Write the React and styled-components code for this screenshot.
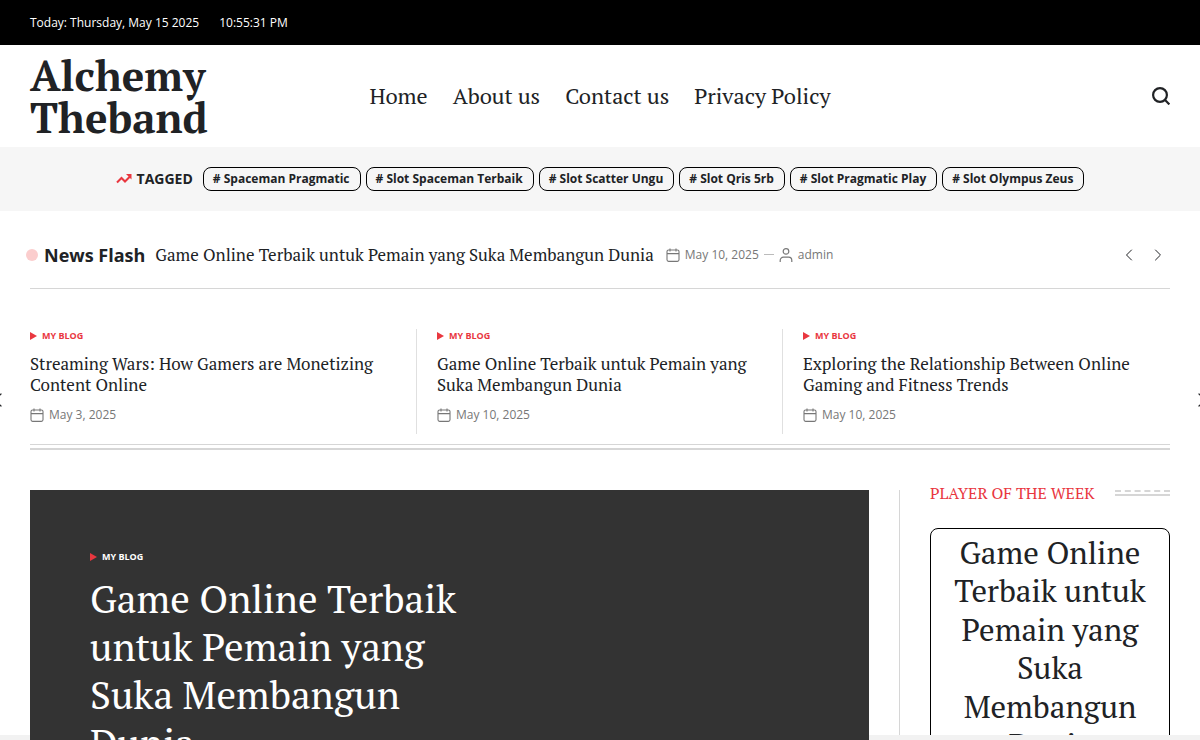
import React from 'react';
import styled, {createGlobalStyle, css} from 'styled-components';
import {ChevronLeft, ChevronRight} from 'lucide-react';

const colors = {
    text: '#202225',
    accent: '#e9373f',
    muted: '#777',
    line: '#d6d6d6',
    soft: '#f6f6f6',
};

const sans = '"Open Sans", "Noto Sans", sans-serif';
const serif = '"PT Serif", "Liberation Serif", serif';

const GlobalStyle = createGlobalStyle`
    *, *::before, *::after {
        box-sizing: border-box;
    }
    html {
        scrollbar-width: none;
    }
    body {
        margin: 0;
        background: #fff;
        color: ${colors.text};
        font-family: ${sans};
        font-size: 12px;
    }
    h1, h2, h3, p, ul {
        margin: 0;
        padding: 0;
        font-weight: 400;
    }
    ul {
        list-style: none;
    }
    a {
        color: inherit;
        text-decoration: none;
    }
    button {
        border: 0;
        padding: 0;
        background: none;
        color: inherit;
        cursor: pointer;
    }
    svg {
        display: block;
        flex-shrink: 0;
    }
`

const Page = styled.div`
    overflow: hidden;
`

const TopBar = styled.div`
    display: flex;
    align-items: center;
    gap: 20px;
    height: 45px;
    padding: 0 30px;
    background: #000;
    color: #fff;
`

const Header = styled.header`
    display: grid;
    grid-template-columns: 1fr auto 1fr;
    align-items: center;
    padding: 9px 30px;
`

const Brand = styled.h1`
    width: min-content;
    font: 700 42px/42px ${serif};
`

const Nav = styled.nav`
    display: flex;
    gap: 25px;
    font: 22px/32px ${serif};
`

const SearchButton = styled.button`
    justify-self: end;
`

const TagBar = styled.section`
    display: flex;
    align-items: center;
    justify-content: center;
    gap: 10px;
    padding: 20px 30px;
    background: ${colors.soft};
`

const TagLabel = styled.h2`
    display: flex;
    align-items: center;
    gap: 5px;
    font-size: 14px;
    font-weight: 700;
    line-height: 24px;
    svg {
        color: ${colors.accent};
    }
`

const TagList = styled.ul`
    display: flex;
    gap: 5px;
`

const Tag = styled.a`
    display: block;
    padding: 0 10px 0 9px;
    border: 1px solid #000;
    border-radius: 8px;
    font-size: 12px;
    font-weight: 700;
    line-height: 22px;
`

const Flash = styled.section`
    display: flex;
    align-items: center;
    height: 78px;
    margin: 0 30px;
    padding-top: 10px;
    border-bottom: 1px solid ${colors.line};
`

const Dot = styled.span`
    width: 12px;
    height: 12px;
    margin: 0 6px 0 -4px;
    border-radius: 50%;
    background: #fbcdcd;
`

const FlashLabel = styled.h2`
    margin-right: 10px;
    font-size: 18px;
    font-weight: 700;
    line-height: 26px;
`

const PostTitle = styled.h3`
    font: 17px/21px ${serif};
`

const Meta = styled.div`
    display: flex;
    align-items: center;
    gap: 5px;
    color: ${colors.muted};
    font-size: 12px;
    line-height: 16px;
    ${props => props.$inline && css`
        margin-left: 12px;
    `}
`

const Dash = styled.span`
    width: 10px;
    height: 1px;
    background: #bbb;
`

const FlashArrows = styled.div`
    display: flex;
    gap: 9px;
    margin-left: auto;
    margin-right: 2px;
`

const Carousel = styled.section`
    position: relative;
    margin: 40px 30px 0;
    padding-bottom: 10px;
    border-bottom: 1px solid ${colors.line};
`

const Slides = styled.div`
    display: grid;
    grid-template-columns: 387fr 366fr 387fr;
`

const Slide = styled.article`
    padding: 0 20px 11px;
    border-right: 1px solid #e0e0e0;
    &:first-child {
        padding-left: 0;
    }
    &:last-child {
        border-right: 0;
    }
    ${PostTitle} {
        margin: 10px 0 12px;
    }
`

// most of each button hangs over the window's edge
const EdgeButton = styled.button`
    position: absolute;
    top: 59px;
    ${props => props.$side}: -44px;
`

const Category = styled.a`
    display: flex;
    align-items: center;
    gap: 5px;
    color: ${props => props.$light ? '#fff' : colors.accent};
    font-size: 9px;
    font-weight: 700;
    line-height: 14px;
    text-transform: uppercase;
    &::before {
        content: '';
        border-left: 7px solid ${colors.accent};
        border-top: 4px solid transparent;
        border-bottom: 4px solid transparent;
    }
`

const Rule = styled.hr`
    height: 2px;
    margin: 3px 30px 0;
    border: 0;
    background: ${colors.line};
`

const Main = styled.main`
    display: grid;
    grid-template-columns: 1fr 271px;
    gap: 30px;
    padding: 40px 30px 0;
`

const Hero = styled.article`
    position: relative;
    z-index: 2;
    min-height: 500px;
    padding: 60px;
    background: #333;
    color: #fff;
`

const HeroTitle = styled.h2`
    max-width: 400px;
    margin-top: 10px;
    font: 39px/48px ${serif};
`

const Sidebar = styled.aside`
    padding-left: 30px;
    border-left: 1px solid ${colors.line};
`

const WidgetHead = styled.div`
    display: flex;
    align-items: center;
    gap: 20px;
    height: 5px;
    margin-bottom: 33px;
    color: ${colors.accent};
    h2 {
        font: 16px/22px ${serif};
        white-space: nowrap;
    }
    &::after {
        content: '';
        flex: 1;
        height: 6px;
        border-top: 2px dashed ${colors.line};
        border-bottom: 2px solid ${colors.line};
    }
`

const PlayerCard = styled.article`
    min-height: 400px;
    padding: 5px 20px;
    border: 1px solid #000;
    border-radius: 8px;
    text-align: center;
    h3 {
        font: 31px/1.24 ${serif};
    }
`

const BottomStrip = styled.div`
    position: fixed;
    z-index: 1;
    left: 0;
    right: 0;
    bottom: 0;
    height: 5px;
    background: #f2f2f2;
`

const menu = ['Home', 'About us', 'Contact us', 'Privacy Policy'];
const tags = [
    'Spaceman Pragmatic',
    'Slot Spaceman Terbaik',
    'Slot Scatter Ungu',
    'Slot Qris 5rb',
    'Slot Pragmatic Play',
    'Slot Olympus Zeus',
];
const headline = 'Game Online Terbaik untuk Pemain yang Suka Membangun Dunia';
const posts = [
    {title: 'Streaming Wars: How Gamers are Monetizing Content Online', date: 'May 3, 2025'},
    {title: headline, date: 'May 10, 2025'},
    {title: 'Exploring the Relationship Between Online Gaming and Fitness Trends', date: 'May 10, 2025'},
];

const SearchIcon = () =>
    <svg width="18" height="18" viewBox="0 0 18 18" fill="none" stroke="currentColor" strokeWidth="2.2">
        <circle cx="8" cy="8" r="6.9"/>
        <path d="M12.8 12.8 17.4 17.4"/>
    </svg>;

const TrendIcon = () =>
    <svg width="16" height="12" viewBox="0 0 16 12" fill="none" stroke="currentColor" strokeWidth="2">
        <path d="M1 9.5 5.5 5l3.5 3.5 5-5"/>
        <path d="M10 1h5.5v5.5z" fill="currentColor" stroke="none"/>
    </svg>;

const CalendarIcon = () =>
    <svg width="14" height="14" viewBox="0 0 14 14" fill="none" stroke="currentColor" strokeWidth="1.1">
        <rect x="1" y="2" width="12" height="11.4" rx="1.6"/>
        <path d="M1 5.6h12M4 .4v3M10 .4v3"/>
    </svg>;

const UserIcon = () =>
    <svg width="14" height="14" viewBox="0 0 14 14" fill="none" stroke="currentColor" strokeWidth="1.2">
        <circle cx="7" cy="3.4" r="2.8"/>
        <path d="M1.2 14v-1.6a3.2 3.2 0 0 1 3.2-3.2h5.2a3.2 3.2 0 0 1 3.2 3.2V14"/>
    </svg>;

const PostDate = ({children}) =>
    <>
        <CalendarIcon/>
        <time>{children}</time>
    </>;

const Post = ({title, date}) =>
    <Slide>
        <Category href="#blog">My Blog</Category>
        <PostTitle><a href="#post">{title}</a></PostTitle>
        <Meta><PostDate>{date}</PostDate></Meta>
    </Slide>;

const App = () =>
    <Page>
        <GlobalStyle/>
        <TopBar>
            <span>Today: Thursday, May 15 2025</span>
            <span>10:55:31 PM</span>
        </TopBar>
        <Header>
            <Brand><a href="#home">Alchemy Theband</a></Brand>
            <Nav>
                {menu.map(item => <a key={item} href="#menu">{item}</a>)}
            </Nav>
            <SearchButton aria-label="Search"><SearchIcon/></SearchButton>
        </Header>
        <TagBar>
            <TagLabel><TrendIcon/>TAGGED</TagLabel>
            <TagList>
                {tags.map(tag => <li key={tag}><Tag href="#tag"># {tag}</Tag></li>)}
            </TagList>
        </TagBar>
        <Flash>
            <Dot/>
            <FlashLabel>News Flash</FlashLabel>
            <PostTitle><a href="#post">{headline}</a></PostTitle>
            <Meta $inline>
                <PostDate>May 10, 2025</PostDate>
                <Dash/>
                <UserIcon/>
                <a href="#author">admin</a>
            </Meta>
            <FlashArrows>
                <button aria-label="Previous headline"><ChevronLeft size={20} strokeWidth={1.2}/></button>
                <button aria-label="Next headline"><ChevronRight size={20} strokeWidth={1.2}/></button>
            </FlashArrows>
        </Flash>
        <Carousel>
            <Slides>
                {posts.map(post => <Post key={post.title} {...post}/>)}
            </Slides>
            <EdgeButton $side="left" aria-label="Previous posts"><ChevronLeft size={24} strokeWidth={1.2}/></EdgeButton>
            <EdgeButton $side="right" aria-label="Next posts"><ChevronRight size={24} strokeWidth={1.2}/></EdgeButton>
        </Carousel>
        <Rule/>
        <Main>
            <Hero>
                <Category href="#blog" $light>My Blog</Category>
                <HeroTitle><a href="#post">{headline}</a></HeroTitle>
            </Hero>
            <Sidebar>
                <WidgetHead><h2>PLAYER OF THE WEEK</h2></WidgetHead>
                <PlayerCard>
                    <h3><a href="#post">{headline}</a></h3>
                </PlayerCard>
            </Sidebar>
        </Main>
        <BottomStrip/>
    </Page>;

export default App;
